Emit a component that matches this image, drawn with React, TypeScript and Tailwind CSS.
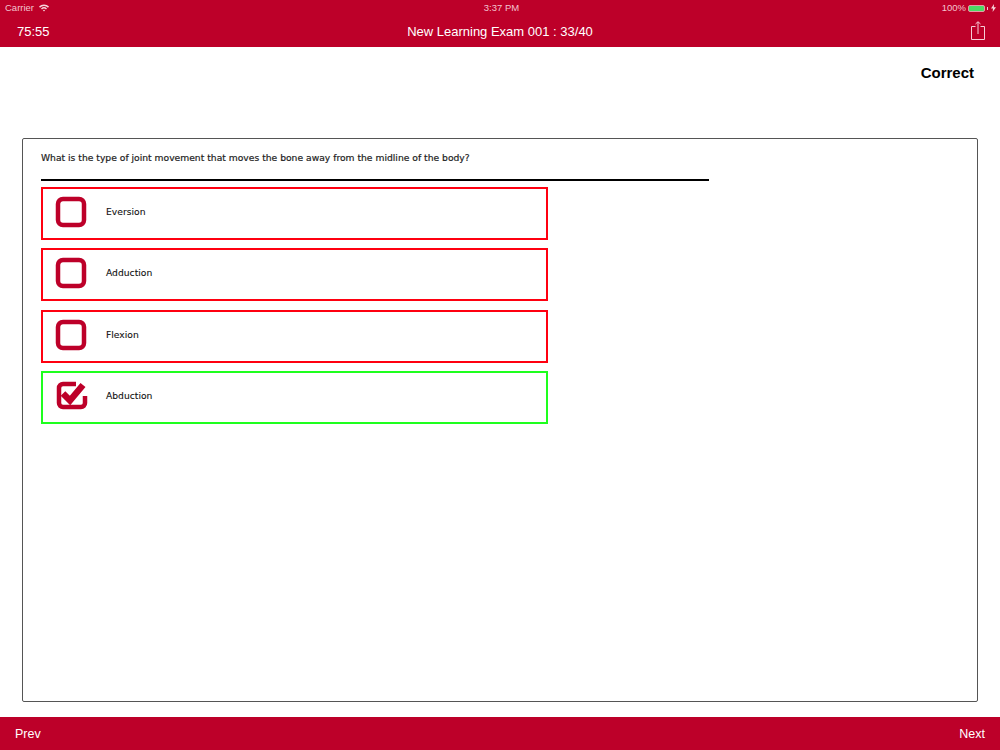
import React from 'react';

const options = [
  { label: 'Eversion', correct: false },
  { label: 'Adduction', correct: false },
  { label: 'Flexion', correct: false },
  { label: 'Abduction', correct: true },
];

const CheckIcon = ({ checked }: { checked: boolean }) => (
  <svg width="34" height="34" viewBox="0 0 34 34" fill="none" className="shrink-0">
    {checked ? (
      <>
        <path d="M21 5 H8 a4 4 0 0 0 -4 4 V24 a4 4 0 0 0 4 4 H26 a4 4 0 0 0 4 -4 V17" stroke="#bd0029" strokeWidth="4.5" />
        <path d="M8 14.5 L15 21.5 L28 6" stroke="#bd0029" strokeWidth="6.5" />
      </>
    ) : (
      <rect x="3" y="4" width="26" height="26" rx="5" stroke="#bd0029" strokeWidth="4.5" />
    )}
  </svg>
);

const App = () => {
  return (
    <div className="w-[1000px] h-[750px] flex flex-col bg-white font-['Liberation_Sans',sans-serif]">
      {/* Header */}
      <div className="h-[47px] bg-[#bd0029] text-white flex flex-col shrink-0">
        <div className="h-[15px] pl-[5px] pr-[4px] pt-[1px] flex items-center justify-between text-[9.5px] text-[#f3c4cf] relative">
          <div className="flex items-center gap-[5px]">
            <span>Carrier</span>
            <svg width="10" height="8" viewBox="0 0 10 8" fill="#f6d5dc">
              <path d="M0 2.6 A7 7 0 0 1 10 2.6 L9 3.7 A5.6 5.6 0 0 0 1 3.7 Z" />
              <path d="M2 4.5 A4.3 4.3 0 0 1 8 4.5 L7 5.5 A3 3 0 0 0 3 5.5 Z" />
              <path d="M3.9 6.3 A1.6 1.6 0 0 1 6.1 6.3 L5 7.6 Z" />
            </svg>
          </div>
          <span className="absolute left-[3px] right-0 text-center">3:37 PM</span>
          <div className="flex items-center gap-[2px]">
            <span>100%</span>
            <div className="w-[17px] h-[7px] rounded-[2px] bg-[#4cd964] border border-[#e89aa9]" />
            <div className="w-[1px] h-[3px] bg-[#f3c4cf]" />
            <svg width="5" height="8" viewBox="0 0 5 8" fill="#f6d5dc" className="ml-[1px]">
              <path d="M3 0 L0 4.6 H2 L1.6 8 L5 3.2 H2.8 Z" />
            </svg>
          </div>
        </div>
        <div className="h-[32px] pl-[17px] pr-[15px] flex items-center justify-between relative text-[13px] pt-[1px]">
          <span>75:55</span>
          <span className="absolute left-0 right-0 text-center">New Learning Exam 001 : 33/40</span>
          <svg width="14" height="19" viewBox="0 0 14 19" fill="none" stroke="#f5cdd6" strokeWidth="1" className="mb-[2px]">
            <path d="M4.5 5.5 H0.5 V18.5 H13.5 V5.5 H9.5" />
            <path d="M7 13 V1 M4.5 3 L7 0.7 L9.5 3" />
          </svg>
        </div>
      </div>

      {/* Result */}
      <div className="h-[91px] shrink-0 pt-[17px] pr-[26px] text-right">
        <span className="text-[15px] leading-[18px] font-bold text-black block">Correct</span>
      </div>

      {/* Question card */}
      <div className="mx-[22px] h-[564px] shrink-0 border border-[#555] rounded-[2px] pl-[18px] pt-[13px]">
        <p className="font-['DejaVu_Sans',sans-serif] text-[9.2px] leading-[12px] text-[#222] [-webkit-text-stroke:0.2px_#222]">
          What is the type of joint movement that moves the bone away from the midline of the body?
        </p>
        <div className="w-[668px] h-[2px] bg-black mt-[15px]" />
        <div className="mt-[6px] flex flex-col gap-[8.34px]">
          {options.map((option) => (
            <div
              key={option.label}
              className={`w-[507px] h-[53px] border-2 flex items-center pl-[12px] pb-[3px] ${
                option.correct ? 'border-[#1eff1e]' : 'border-[#ff0010]'
              }`}
            >
              <CheckIcon checked={option.correct} />
              <span className="ml-[17px] font-['DejaVu_Sans',sans-serif] text-[9.2px] text-[#111] [-webkit-text-stroke:0.1px_#111]">{option.label}</span>
            </div>
          ))}
        </div>
      </div>

      {/* Footer */}
      <div className="mt-auto h-[33px] bg-[#bd0029] text-white text-[12.5px] flex items-center justify-between px-[15px] pt-[1px]">
        <span>Prev</span>
        <span>Next</span>
      </div>
    </div>
  );
};

export default App;
